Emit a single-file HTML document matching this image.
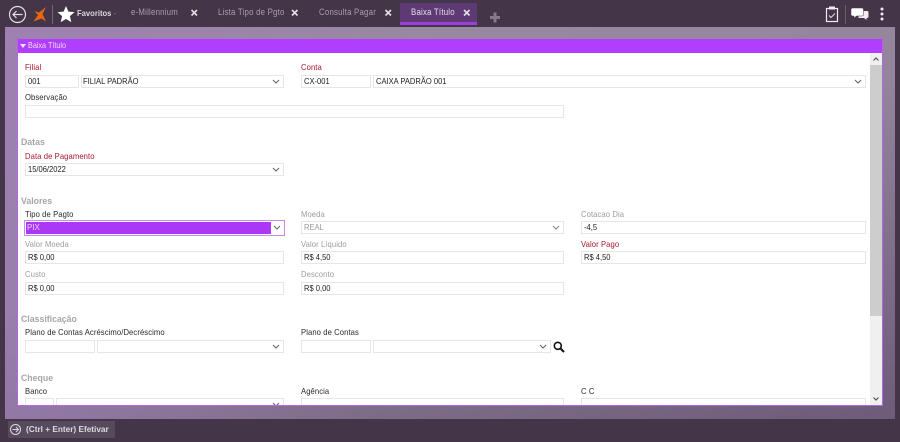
<!DOCTYPE html>
<html lang="pt">
<head>
<meta charset="utf-8">
<title>Baixa Título</title>
<style>
html,body{margin:0;padding:0;width:900px;height:442px;overflow:hidden;background:#443548;font-family:"Liberation Sans",sans-serif}
.a{position:absolute}
#root{position:relative;width:900px;height:442px;overflow:hidden;background:#443548;filter:blur(.3px)}
#bg{left:5px;top:27px;width:890px;height:392px;background:linear-gradient(100deg,rgba(160,120,190,.55) 0%,rgba(150,130,165,0) 45%),linear-gradient(165deg,#9b8ba2 0%,#94849c 45%,#6d5b79 100%)}
#panel{left:17px;top:39px;width:864px;height:365px;border:1px solid #b565e8;border-top-color:#b13dff;background:#fff;overflow:hidden}
#head{left:0;top:0;width:864px;height:13px;background:#b13dff;color:#efdcff;font-size:8.5px;line-height:11px}
.l,.h,.f{white-space:nowrap}
.l{position:absolute;font-size:8.5px;line-height:11px;color:#2a2a2a;letter-spacing:.1px;transform:scaleX(.9);transform-origin:0 0}
.r{color:#a5182f}
.g{color:#9c9c9c}
.h{position:absolute;font-size:9.5px;line-height:12px;font-weight:bold;color:#a6a6a6;transform:scaleX(.92);transform-origin:0 0}
.f{position:absolute;box-sizing:border-box;height:13px;border:1px solid #e6e6e6;background:#fff;font-size:8.5px;line-height:11px;padding-left:2px;color:#222}
.t{display:inline-block;transform:scaleX(.89);transform-origin:0 0}
.f svg,.c{position:absolute}
.tab{position:absolute;top:6px;font-size:9px;line-height:12px;color:#a99fae;letter-spacing:.25px;white-space:nowrap;transform:scaleX(.87);transform-origin:0 0}
</style>
</head>
<body>
<div id="root">
<div class="a" id="bg"></div>

<!-- top bar -->
<svg class="a" style="left:0;top:0" width="130" height="27" viewBox="0 0 130 27">
  <circle cx="17.5" cy="14.5" r="8" fill="none" stroke="#e4e0e6" stroke-width="1.2"/>
  <path d="M22.5 14.5H13M16.500 11l-3.500 3.500 3.500 3.500" fill="none" stroke="#e4e0e6" stroke-width="1.2"/>
  <path d="M46 7l-3.500 7 3.500 7.500-4.500-3-8 3 4.500-6.500-3.500-4 4.500 1.500z" fill="#e9660f"/>
  <path d="M52.500 5v19" stroke="#75687a" stroke-width="1"/>
  <path d="M66 6l2.400 5.600 6.100.5-4.600 4 1.400 6L66 19l-5.300 3.100 1.400-6-4.600-4 6.100-.5z" fill="#fff"/>
</svg>
<div class="a" style="left:77px;top:8px;font-size:8.500px;line-height:11px;font-weight:bold;color:#dcd6de;white-space:nowrap;transform:scaleX(.9);transform-origin:0 0">Favoritos <span style="color:#99909c;font-weight:normal">-</span></div>
<div class="tab" style="left:131px">e-Millennium</div>
<div class="tab" style="left:218px">Lista Tipo de Pgto</div>
<div class="tab" style="left:319px">Consulta Pagar</div>
<div class="a" style="left:400px;top:3px;width:77px;height:22px;background:#5e3a75"></div>
<div class="a" style="left:400px;top:22px;width:77px;height:3px;background:#9a3fd8"></div>
<div class="tab" style="left:411px;color:#e4dce8">Baixa Título</div>
<svg class="a" style="left:0;top:0" width="900" height="27" viewBox="0 0 900 27">
  <g stroke="#e2dee4" stroke-width="1.600" fill="none">
    <path d="M191.500 10l5.500 5.500M197 10l-5.500 5.500"/>
    <path d="M292 10l5.500 5.500M297.500 10l-5.500 5.500"/>
    <path d="M385.500 10l5.500 5.500M391 10l-5.500 5.500"/>
    <path d="M464 10l5.500 5.500M469.500 10l-5.500 5.500"/>
  </g>
  <path d="M495 12.500v10M490 17.500h10" stroke="#85798a" stroke-width="3"/>
  <rect x="826.500" y="8.500" width="11" height="13" fill="none" stroke="#eeeaf0" stroke-width="1.200"/>
  <rect x="829" y="6.500" width="6" height="3" fill="#eeeaf0"/>
  <path d="M829 15.500l2 2 4-4" fill="none" stroke="#e4e0e6" stroke-width="1"/>
  <path d="M845.500 5v19" stroke="#6d5f72" stroke-width="1"/>
  <path d="M862 11h5a1.500 1.500 0 0 1 1.500 1.500v4a1.500 1.500 0 0 1-1.500 1.500h-.5v2l-2.500-2h-5.500v-2h3z" fill="#f0ecf2"/>
  <path d="M852.500 8h9.500a1.500 1.500 0 0 1 1.500 1.500v5a1.500 1.500 0 0 1-1.500 1.500h-5.500l-2.500 2v-2h-1.500a1.500 1.500 0 0 1-1.500-1.500v-5a1.500 1.500 0 0 1 1.500-1.500z" fill="#fff" stroke="#443548" stroke-width=".5"/>
  <circle cx="882" cy="9" r="1.500" fill="#efeaf1"/>
  <circle cx="882" cy="14" r="1.500" fill="#efeaf1"/>
  <circle cx="882" cy="19" r="1.500" fill="#efeaf1"/>
</svg>

<!-- panel -->
<div class="a" id="panel">
  <div class="a" id="head">
    <svg class="c" style="left:2px;top:4px" width="6" height="4"><path d="M0 0h6L3 4z" fill="#f3e4ff"/></svg>
    <span class="a" style="left:10px;top:0;white-space:nowrap;transform:scaleX(.85);transform-origin:0 0">Baixa Título</span>
  </div>

  <!-- scrollbar: panel origin is 18,40 -->
  <div class="a" style="left:852px;top:13px;width:12px;height:352px;background:#f0f0f0"></div>
  <div class="a" style="left:852px;top:25px;width:12px;height:251px;background:#cdcdcd"></div>
  <svg class="c" style="left:852px;top:13px" width="12" height="352">
    <path d="M3.500 7.500L6 5l2.500 2.500" fill="none" stroke="#555" stroke-width="1.200"/>
    <path d="M3.500 344.500L6 347l2.500-2.500" fill="none" stroke="#555" stroke-width="1.200"/>
  </svg>

  <!-- row: Filial / Conta -->
  <div class="l r" style="left:7px;top:22px">Filial</div>
  <div class="f" style="left:7px;top:35px;width:54px"><span class="t">001</span></div>
  <div class="f" style="left:63px;top:35px;width:203px;padding-left:1px"><span class="t">FILIAL PADRÃO</span><svg style="right:3px;top:3px" width="8" height="6"><path d="M1 1l3 3 3-3" fill="none" stroke="#666" stroke-width="1.100"/></svg></div>
  <div class="l r" style="left:283px;top:22px">Conta</div>
  <div class="f" style="left:283px;top:35px;width:70px"><span class="t">CX-001</span></div>
  <div class="f" style="left:355px;top:35px;width:493px"><span class="t">CAIXA PADRÃO 001</span><svg style="right:3px;top:3px" width="8" height="6"><path d="M1 1l3 3 3-3" fill="none" stroke="#666" stroke-width="1.100"/></svg></div>
  <div class="l" style="left:7px;top:52px">Observação</div>
  <div class="f" style="left:7px;top:65px;width:539px"></div>

  <!-- Datas -->
  <div class="h" style="left:3px;top:97px">Datas</div>
  <div class="l r" style="left:7px;top:111px">Data de Pagamento</div>
  <div class="f" style="left:7px;top:123px;width:259px"><span class="t">15/06/2022</span><svg style="right:3px;top:3px" width="8" height="6"><path d="M1 1l3 3 3-3" fill="none" stroke="#666" stroke-width="1.100"/></svg></div>

  <!-- Valores -->
  <div class="h" style="left:3px;top:156px">Valores</div>
  <div class="l" style="left:7px;top:169px">Tipo de Pagto</div>
  <div class="a" style="left:6px;top:180px;width:261px;height:16px;box-sizing:border-box;border:1px solid #c98af0;background:#fff"></div>
  <div class="a" style="left:8px;top:182px;width:245px;height:12px;background:#ab38f5;color:#e9d2fb;font-size:8px;line-height:12px;padding-left:1px;box-sizing:border-box">PIX</div>
  <svg class="c" style="left:255px;top:185px" width="8" height="6"><path d="M1 1l3 3 3-3" fill="none" stroke="#666" stroke-width="1.100"/></svg>

  <div class="l g" style="left:283px;top:169px">Moeda</div>
  <div class="f" style="left:283px;top:181px;width:263px;color:#999;padding-left:2px"><span class="t">REAL</span><svg style="right:3px;top:3px" width="8" height="6"><path d="M1 1l3 3 3-3" fill="none" stroke="#888" stroke-width="1.100"/></svg></div>
  <div class="l g" style="left:563px;top:169px">Cotacao Dia</div>
  <div class="f" style="left:563px;top:181px;width:285px"><span class="t">-4,5</span></div>

  <div class="l g" style="left:7px;top:199px">Valor Moeda</div>
  <div class="f" style="left:7px;top:211px;width:259px"><span class="t">R$ 0,00</span></div>
  <div class="l g" style="left:283px;top:199px">Valor Líquido</div>
  <div class="f" style="left:283px;top:211px;width:263px"><span class="t">R$ 4,50</span></div>
  <div class="l r" style="left:563px;top:199px">Valor Pago</div>
  <div class="f" style="left:563px;top:211px;width:285px"><span class="t">R$ 4,50</span></div>

  <div class="l g" style="left:7px;top:229px">Custo</div>
  <div class="f" style="left:7px;top:242px;width:259px"><span class="t">R$ 0,00</span></div>
  <div class="l g" style="left:283px;top:229px">Desconto</div>
  <div class="f" style="left:283px;top:242px;width:263px"><span class="t">R$ 0,00</span></div>

  <!-- Classificação -->
  <div class="h" style="left:3px;top:274px">Classificação</div>
  <div class="l" style="left:7px;top:287px">Plano de Contas Acréscimo/Decréscimo</div>
  <div class="f" style="left:7px;top:300px;width:70px"></div>
  <div class="f" style="left:79px;top:300px;width:187px"><svg style="right:3px;top:3px" width="8" height="6"><path d="M1 1l3 3 3-3" fill="none" stroke="#666" stroke-width="1.100"/></svg></div>
  <div class="l" style="left:283px;top:287px">Plano de Contas</div>
  <div class="f" style="left:283px;top:300px;width:70px"></div>
  <div class="f" style="left:355px;top:300px;width:178px"><svg style="right:3px;top:3px" width="8" height="6"><path d="M1 1l3 3 3-3" fill="none" stroke="#666" stroke-width="1.100"/></svg></div>
  <svg class="c" style="left:535px;top:301px" width="12" height="12"><circle cx="4.800" cy="4.800" r="3.500" fill="none" stroke="#111" stroke-width="1.600"/><path d="M7.500 7.500l3.500 3.500" stroke="#111" stroke-width="2"/></svg>

  <!-- Cheque -->
  <div class="h" style="left:3px;top:333px">Cheque</div>
  <div class="l" style="left:7px;top:346px">Banco</div>
  <div class="f" style="left:7px;top:358px;width:29px"></div>
  <div class="f" style="left:38px;top:358px;width:228px"><svg style="right:3px;top:3px" width="8" height="6"><path d="M1 1l3 3 3-3" fill="none" stroke="#666" stroke-width="1.100"/></svg></div>
  <div class="l" style="left:283px;top:346px">Agência</div>
  <div class="f" style="left:283px;top:358px;width:263px"></div>
  <div class="l" style="left:563px;top:346px">C C</div>
  <div class="f" style="left:563px;top:358px;width:285px"></div>
</div>

<!-- bottom bar -->
<div class="a" style="left:8px;top:421px;width:107px;height:17px;background:#574a5c"></div>
<svg class="a" style="left:9px;top:423px" width="13" height="13" viewBox="0 0 13 13">
  <circle cx="6.500" cy="6.500" r="5" fill="none" stroke="#dcd8de" stroke-width="1"/>
  <path d="M3.500 6.500h6M7 4l2.500 2.500L7 9" fill="none" stroke="#dcd8de" stroke-width="1"/>
</svg>
<div class="a" style="left:26px;top:424px;font-size:8.500px;line-height:11px;font-weight:bold;color:#ded9e0;white-space:nowrap;transform:scaleX(.97);transform-origin:0 0">(Ctrl + Enter) Efetivar</div>
</div>
</body>
</html>
